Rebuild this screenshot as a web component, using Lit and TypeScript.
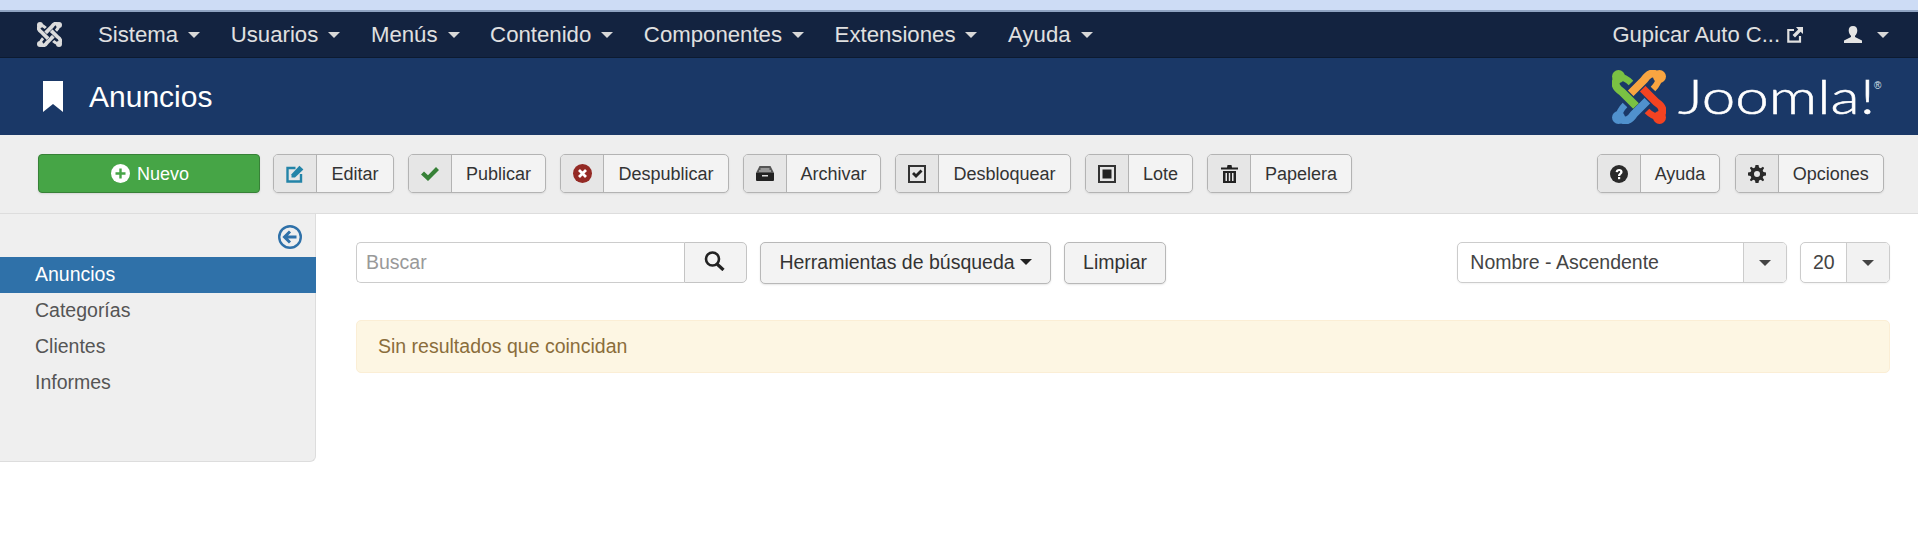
import { LitElement, html, css, svg } from "lit";
import { customElement } from "lit/decorators.js";

const limb = (color: string, bg: string, angle: number) => svg`
  <g transform="rotate(${angle} 27 27)">
    <path d="M10 22 L24 36" fill="none" stroke=${bg} stroke-width="10.5"></path>
    <path d="M6.5 6.5 C1 14 4 18 10 22 L24 36" fill="none" stroke=${color} stroke-width="8" stroke-linejoin="round"></path>
    <path d="M6.5 6.5 C11 7 15 9 19 13" fill="none" stroke=${color} stroke-width="6.5"></path>
    <circle cx="6.5" cy="6.5" r="6.5" fill=${color}></circle>
  </g>`;

const knot = (size: number, colors: string[], bg: string) => html`
  <svg width=${size} height=${size} viewBox="0 0 54 54">
    ${limb(colors[3], bg, 270)}${limb(colors[2], bg, 180)}${limb(colors[1], bg, 90)}${limb(colors[0], bg, 0)}
  </svg>`;

const Caret = (c: string) => html`<svg class="caret" width="12" height="6" viewBox="0 0 12 6"><path d="M0 0H12L6 6z" fill=${c}></path></svg>`;

const icons: Record<string, unknown> = {
  edit: html`<svg width="18" height="18" viewBox="0 0 18 18"><path d="M9.5 3H1.5V16.5H15V9" fill="none" stroke="#2384a8" stroke-width="2.4"></path><path d="M5.5 12.5V9.2L13.4.8 17.4 4.6 9 12.5z" fill="#2384a8"></path></svg>`,
  check: html`<svg width="18" height="14" viewBox="0 0 18 14"><path d="M0 7.5 3 4.5 7 8.2 15 0 18 3 7 14z" fill="#378137"></path></svg>`,
  cross: html`<svg width="19" height="19" viewBox="0 0 19 19"><circle cx="9.5" cy="9.5" r="9.5" fill="#942a25"></circle><path d="M6 6 13 13M13 6 6 13" stroke="#fff" stroke-width="2.8"></path></svg>`,
  archive: html`<svg width="18" height="15" viewBox="0 0 18 15"><path d="M3.5 0H14.5L18 7H0z" fill="#555"></path><path d="M4.5 3H13.5M3 5H15" stroke="#ddd" stroke-width="1"></path><path d="M0 7H18V14Q18 15 17 15H1Q0 15 0 14z" fill="#222"></path><rect x="6" y="9" width="6" height="1.5" fill="#ddd"></rect></svg>`,
  checkbox: html`<svg width="18" height="18" viewBox="0 0 18 18"><rect x="1" y="1" width="16" height="16" fill="none" stroke="#333" stroke-width="2"></rect><path d="M4 9 6 7 8 9 12.5 4.5 14.5 6.5 8 13z" fill="#222"></path></svg>`,
  batch: html`<svg width="18" height="18" viewBox="0 0 18 18"><rect x="1" y="1" width="16" height="16" fill="none" stroke="#333" stroke-width="2"></rect><rect x="4.5" y="4.5" width="9" height="9" fill="#222"></rect></svg>`,
  trash: html`<svg width="17" height="18" viewBox="0 0 17 18"><path d="M0 2.5H6L6.5 0H10.5L11 2.5H17V4.5H0z" fill="#222"></path><path d="M2 6H15V18H2zM4.5 8V16H6V8zM7.8 8V16H9.2V8zM11 8V16H12.5V8z" fill="#222" fill-rule="evenodd"></path></svg>`,
  help: html`<svg width="18" height="18" viewBox="0 0 18 18"><circle cx="9" cy="9" r="9" fill="#2a2a2a"></circle><path d="M5.6 7C5.8 5 7.2 4 9.1 4 11.2 4 12.6 5.2 12.6 6.9 12.6 9 10.2 9.2 10.2 11H8C8 8.3 10.2 8.3 10.2 7 10.2 6.4 9.8 6 9.1 6 8.4 6 8 6.4 7.9 7.2z" fill="#fff"></path><rect x="8" y="12" width="2.2" height="2.2" fill="#fff"></rect></svg>`,
  gear: html`<svg width="18" height="18" viewBox="0 0 18 18"><path fill-rule="evenodd" fill="#2a2a2a" d="M7.5 0H10.5L11 2.6 12.7 3.3 14.9 1.8 16.2 3.1 14.7 5.3 15.4 7 18 7.5V10.5L15.4 11 14.7 12.7 16.2 14.9 14.9 16.2 12.7 14.7 11 15.4 10.5 18H7.5L7 15.4 5.3 14.7 3.1 16.2 1.8 14.9 3.3 12.7 2.6 11 0 10.5V7.5L2.6 7 3.3 5.3 1.8 3.1 3.1 1.8 5.3 3.3 7 2.6zM9 6A3 3 0 1 0 9 12 3 3 0 1 0 9 6z"></path></svg>`,
};

interface Tool { icon: string; label: string; w: number }
const left: Tool[] = [
  { icon: "edit", label: "Editar", w: 121 },
  { icon: "check", label: "Publicar", w: 138 },
  { icon: "cross", label: "Despublicar", w: 169 },
  { icon: "archive", label: "Archivar", w: 138 },
  { icon: "checkbox", label: "Desbloquear", w: 176 },
  { icon: "batch", label: "Lote", w: 108 },
  { icon: "trash", label: "Papelera", w: 145 },
];
const right: Tool[] = [
  { icon: "help", label: "Ayuda", w: 122.4 },
  { icon: "gear", label: "Opciones", w: 149.4 },
];
const menu = ["Sistema", "Usuarios", "Menús", "Contenido", "Componentes", "Extensiones", "Ayuda"];
const side = ["Anuncios", "Categorías", "Clientes", "Informes"];

@customElement("app-root")
export class AppRoot extends LitElement {
  static styles = css`
    :host { display: block; min-height: 549px; background: #fff; font-family: "Liberation Sans", Arial, sans-serif; color: #333; overflow: hidden; }
    * { box-sizing: border-box; }
    .strip { height: 12px; background: #cddcf5; border-bottom: 2px solid #8fa3c2; }
    .nav { height: 46px; background: #132340; border-bottom: 1px solid #0c1a30; display: flex; align-items: center; padding: 0 29px 0 37px; color: #e0e0e0; font-size: 22.2px; }
    .brand { width: 25px; height: 25px; margin-right: 36px; display: flex; }
    .menu { display: flex; gap: 30.6px; align-items: center; }
    .item { display: flex; align-items: center; gap: 10px; white-space: nowrap; }
    .caret { flex: none; }
    .navright { margin-left: auto; display: flex; align-items: center; }
    .site { white-space: nowrap; font-size: 22px; }
    .ext { margin-left: 7px; margin-right: 41px; display: flex; }
    .user { display: flex; margin-right: 15px; }
    .header { height: 77px; background: #1a3867; display: flex; align-items: center; padding: 0 31px 0 43px; color: #fff; }
    .book { margin-right: 26px; margin-top: -1px; display: flex; }
    h1 { margin: 0; font-size: 30px; font-weight: 400; line-height: 1; }
    .logo { margin-left: auto; display: flex; align-items: center; gap: 11px; }
    .mark { margin: -8px 0; overflow: visible; }
    .word { font-family: Lato, "Liberation Sans", sans-serif; font-weight: 300; font-size: 47px; fill: #fff; stroke: #fff; stroke-width: 0.5px; }
    .reg { font-family: "Liberation Sans", sans-serif; font-size: 10px; fill: #dfe6f0; }
    .toolbar { height: 79px; background: #eee; border-bottom: 1px solid #ddd; display: flex; padding: 19px 34px 0 38px; gap: 14px; font-size: 18px; }
    .new { width: 222px; height: 39px; margin-right: -1px; padding-left: 2px; background: #46a546; border: 1px solid #378137; border-radius: 4px; color: #fff; display: flex; align-items: center; justify-content: center; gap: 7px; box-shadow: 0 1px 2px rgba(0,0,0,.1); }
    .new span { padding-top: 2px; }
    .tool { height: 39px; display: flex; background: #f3f3f3; border: 1px solid #b3b3b3; border-radius: 5px; overflow: hidden; box-shadow: 0 1px 2px rgba(0,0,0,.08); }
    .ico { flex: none; width: 43px; background: #e6e6e6; border-right: 1px solid #b3b3b3; display: flex; align-items: center; justify-content: center; }
    .lbl { flex: 1; display: flex; align-items: center; justify-content: center; white-space: nowrap; color: #333; padding-top: 2px; }
    .rgroup { margin-left: auto; display: flex; gap: 14.9px; }
    .main { display: grid; grid-template-columns: 316px 1fr; align-items: start; }
    .sidebar { height: 248px; background: #efefef; border-right: 1px solid #ddd; border-bottom: 1px solid #ddd; border-bottom-right-radius: 6px; font-size: 19.5px; color: #555; }
    .back { height: 43px; display: flex; justify-content: flex-end; align-items: center; padding: 2px 13px 0 0; }
    .row { height: 36px; display: flex; align-items: center; padding: 0 0 2px 35px; }
    .row.active { background: #2f71a9; color: #fff; margin-right: -1px; }
    .content { padding: 28px 28.3px 0 40px; font-size: 19.5px; }
    .filters { display: flex; height: 41px; margin-bottom: 37px; }
    .search { width: 328px; height: 41px; border: 1px solid #ccc; border-right: none; border-radius: 5px 0 0 5px; display: flex; align-items: center; padding-left: 9px; color: #999; background: #fff; }
    .go { width: 63px; height: 41px; background: #f3f3f3; border: 1px solid #c4c4c4; border-radius: 0 5px 5px 0; display: flex; align-items: center; justify-content: center; padding: 0 2px 4px 0; margin-right: 13px; }
    .btn { height: 42px; background: #f3f3f3; border: 1px solid #b8b8b8; border-radius: 5px; display: flex; align-items: center; justify-content: center; gap: 5px; box-shadow: 0 1px 2px rgba(0,0,0,.1); white-space: nowrap; color: #333; padding-bottom: 2px; }
    .tools { width: 291px; margin-right: 13px; }
    .clear { width: 102px; }
    .sel { height: 41px; border: 1px solid #ccc; border-radius: 5px; display: flex; background: #fff; overflow: hidden; box-shadow: 0 1px 2px rgba(0,0,0,.05); color: #444; }
    .sel.a { width: 329.4px; margin-left: auto; margin-right: 13.3px; }
    .sel.b { width: 89.7px; }
    .val { flex: 1; display: flex; align-items: center; padding-left: 12px; white-space: nowrap; }
    .arrow { flex: none; width: 43px; background: #f2f2f2; border-left: 1px solid #ccc; display: flex; align-items: center; justify-content: center; }
    .alert { height: 53px; background: #fdf6e3; border: 1px solid #fbeed5; border-radius: 5px; color: #8a6d3b; display: flex; align-items: center; padding-left: 21px; }
  `;

  private tool(t: Tool) {
    return html`<div class="tool" style="width:${t.w}px"><span class="ico">${icons[t.icon]}</span><span class="lbl">${t.label}</span></div>`;
  }

  render() {
    return html`
      <div class="strip"></div>
      <nav class="nav">
        <span class="brand">${knot(25, ["#dcdcdc", "#dcdcdc", "#dcdcdc", "#dcdcdc"], "#132340")}</span>
        <div class="menu">
          ${menu.map((m) => html`<span class="item">${m}${Caret("#d8d8d8")}</span>`)}
        </div>
        <div class="navright">
          <span class="site">Gupicar Auto C...</span>
          <span class="ext"><svg width="16" height="16" viewBox="0 0 16 16"><path d="M7 3H1.3V14.7H13V9" fill="none" stroke="#e0e0e0" stroke-width="2.2"></path><path d="M9 0H16V7L13.6 4.8 8 10.4 5.6 8 11.2 2.4z" fill="#e0e0e0"></path></svg></span>
          <span class="user"><svg width="18" height="17" viewBox="0 0 18 17"><path d="M9 0C12 0 13.3 2 13.3 4.5 13.3 7 12 9 11 9.7V11L18 14.5V17H0V14.5L7 11V9.7C6 9 4.7 7 4.7 4.5 4.7 2 6 0 9 0z" fill="#e4e4e4"></path></svg></span>
          ${Caret("#d8d8d8")}
        </div>
      </nav>
      <header class="header">
        <span class="book"><svg width="20" height="31" viewBox="0 0 20 31"><path d="M0 0H20V31L10 23 0 31z" fill="#fff"></path></svg></span>
        <h1>Anuncios</h1>
        <div class="logo">
          ${knot(54, ["#7ac143", "#f9a541", "#f44321", "#5091cd"], "#1a3867")}
          <svg class="mark" width="210" height="70" viewBox="0 0 210 70">
            <text class="word" transform="translate(1 52) scale(1.28 1)">Joomla!</text>
            <text class="reg" x="197" y="27">®</text>
          </svg>
        </div>
      </header>
      <div class="toolbar">
        <div class="new"><svg width="19" height="19" viewBox="0 0 19 19"><circle cx="9.5" cy="9.5" r="9.5" fill="#fff"></circle><path d="M9.5 4.5V14.5M4.5 9.5H14.5" stroke="#46a546" stroke-width="2.4"></path></svg><span>Nuevo</span></div>
        ${left.map((t) => this.tool(t))}
        <div class="rgroup">${right.map((t) => this.tool(t))}</div>
      </div>
      <div class="main">
        <aside class="sidebar">
          <div class="back"><svg width="24" height="24" viewBox="0 0 24 24"><circle cx="12" cy="12" r="10.8" fill="none" stroke="#2f71a9" stroke-width="2.4"></circle><path d="M18.5 12H7M12 6.5 6.5 12 12 17.5" fill="none" stroke="#2f71a9" stroke-width="3"></path></svg></div>
          ${side.map((s, i) => html`<div class="row ${i === 0 ? "active" : ""}">${s}</div>`)}
        </aside>
        <section class="content">
          <div class="filters">
            <div class="search">Buscar</div>
            <div class="go"><svg width="21" height="20" viewBox="0 0 21 20"><circle cx="8.5" cy="8" r="6.5" fill="none" stroke="#222" stroke-width="2.6"></circle><path d="M13 13 19.5 19" stroke="#222" stroke-width="3.2"></path></svg></div>
            <div class="btn tools">Herramientas de búsqueda ${Caret("#222")}</div>
            <div class="btn clear">Limpiar</div>
            <div class="sel a"><span class="val">Nombre - Ascendente</span><span class="arrow">${Caret("#444")}</span></div>
            <div class="sel b"><span class="val">20</span><span class="arrow">${Caret("#444")}</span></div>
          </div>
          <div class="alert">Sin resultados que coincidan</div>
        </section>
      </div>
    `;
  }
}
